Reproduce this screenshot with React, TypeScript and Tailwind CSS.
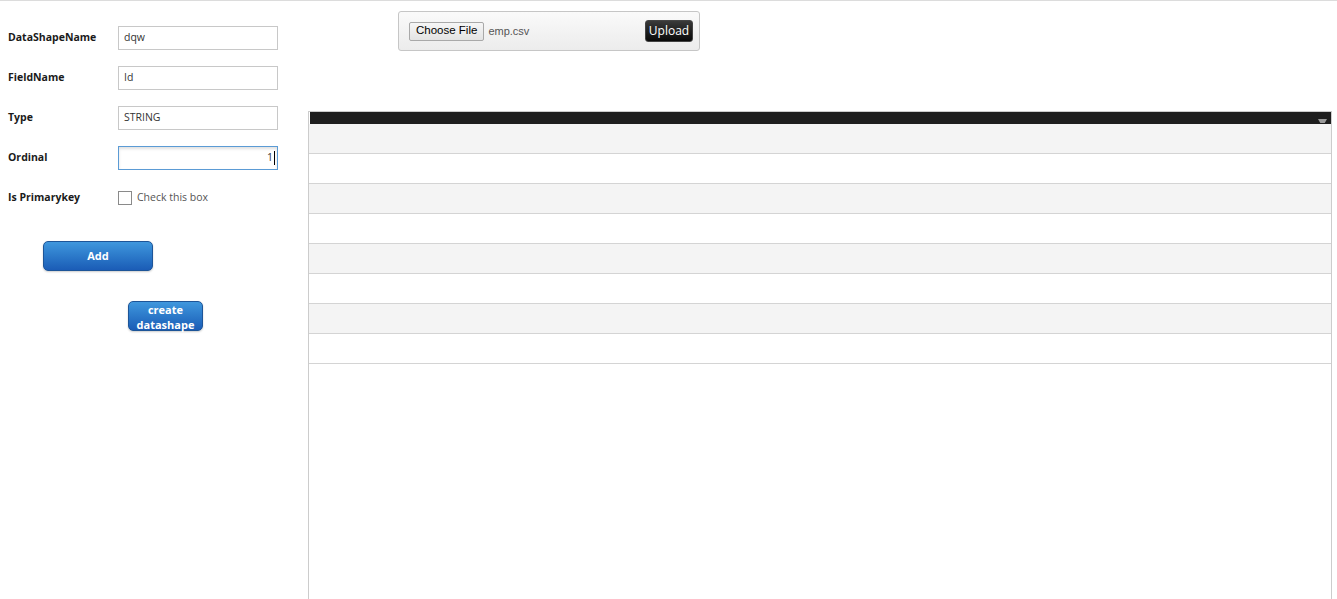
import React from "react";

const FIELDS = [
  { label: "DataShapeName", value: "dqw" },
  { label: "FieldName", value: "Id" },
  { label: "Type", value: "STRING" },
];

const ROWS = [0, 1, 2, 3, 4, 5, 6, 7];

export default function App() {
  return (
    <div
      className="h-screen overflow-hidden bg-white border-t border-[#dcdcdc] flex"
      style={{ fontFamily: '"Open Sans", "Liberation Sans", sans-serif' }}
    >
      {/* LEFT FORM */}
      <div className="w-[308px] shrink-0 pl-2 pt-[25px] flex flex-col">
        {FIELDS.map((f) => (
          <div key={f.label} className="flex items-center h-6 mb-4">
            <div className="w-[110px] text-[10.5px] font-bold text-[#1a1a1a] -mt-px">
              {f.label}
            </div>
            <div className="w-[160px] h-6 border border-[#c8c8c8] flex items-center px-[5px] text-[10.5px] text-[#333]">
              {f.value}
            </div>
          </div>
        ))}

        {/* ORDINAL (focused) */}
        <div className="flex items-center h-6 mb-4">
          <div className="w-[110px] text-[10.5px] font-bold text-[#1a1a1a] -mt-px">
            Ordinal
          </div>
          <div className="w-[160px] h-6 border border-[#5b9bd5] shadow-[inset_0_2px_3px_rgba(0,0,0,0.12)] flex items-center justify-end pr-[2px] text-[10.5px] text-[#333]">
            1
            <span className="w-px h-[14px] bg-black ml-px" />
          </div>
        </div>

        {/* PRIMARY KEY */}
        <div className="flex items-center h-6">
          <div className="w-[110px] text-[10.5px] font-bold text-[#1a1a1a] -mt-px">
            Is Primarykey
          </div>
          <div className="w-[14px] h-[14px] border border-[#8a8a8a] bg-white" />
          <div className="ml-[5px] text-[10.5px] text-[#555]">Check this box</div>
        </div>

        {/* BUTTONS */}
        <button className="mt-[31px] ml-[35px] w-[110px] h-[30px] rounded-[5px] border border-[#1d5598] bg-linear-to-b from-[#3f97dd] to-[#1b5cb6] text-white text-[11px] font-bold shadow-[0_1px_2px_rgba(0,0,0,0.2)]">
          Add
        </button>

        <button className="mt-[30px] ml-[120px] w-[75px] h-[30px] rounded-[5px] border border-[#1d5598] bg-linear-to-b from-[#3f97dd] to-[#1b5cb6] text-white text-[11px] font-bold leading-[15px] shadow-[0_1px_2px_rgba(0,0,0,0.2)]">
          create
          <br />
          datashape
        </button>
      </div>

      {/* RIGHT CONTENT */}
      <div className="flex-1 flex flex-col pr-[5px]">
        {/* UPLOAD PANEL */}
        <div className="shrink-0 mt-[10px] ml-[90px] w-[302px] h-10 border border-[#c6c6c6] rounded-[3px] bg-linear-to-b from-[#fafafa] to-[#ececec] flex items-center pl-[10px] pr-[6px]">
          <div
            className="h-[19px] px-[6px] border border-[#a9a9a9] rounded-[2px] bg-linear-to-b from-[#f6f6f6] to-[#e3e3e3] flex items-center text-[11.5px] text-black"
            style={{ fontFamily: '"Liberation Sans", Arial, sans-serif' }}
          >
            Choose File
          </div>
          <div
            className="ml-[4px] text-[11px] text-[#555]"
            style={{ fontFamily: '"Liberation Sans", Arial, sans-serif' }}
          >
            emp.csv
          </div>
          <div className="ml-auto h-[22px] w-[48px] justify-center rounded-[3px] border border-[#444] bg-linear-to-b from-[#3a3a3a] to-[#0a0a0a] flex items-center text-[12px] text-white">
            Upload
          </div>
        </div>

        {/* GRID */}
        <div className="shrink-0 mt-[60px] h-[500px] border border-[#cccccc] border-b-0">
          <div className="relative h-[12px] bg-[#1e1e1e] ml-px">
            <div className="absolute right-[4px] top-[7px] w-[9px] h-[4px] bg-[#9a9a9a] [clip-path:polygon(0_0,100%_0,75%_100%,25%_100%)]" />
          </div>
          {ROWS.map((i) => (
            <div
              key={i}
              className={
                "h-[30px] border-b border-[#d4d4d4] " +
                (i % 2 === 0 ? "bg-[#f4f4f4]" : "bg-white")
              }
            />
          ))}
        </div>
      </div>
    </div>
  );
}
